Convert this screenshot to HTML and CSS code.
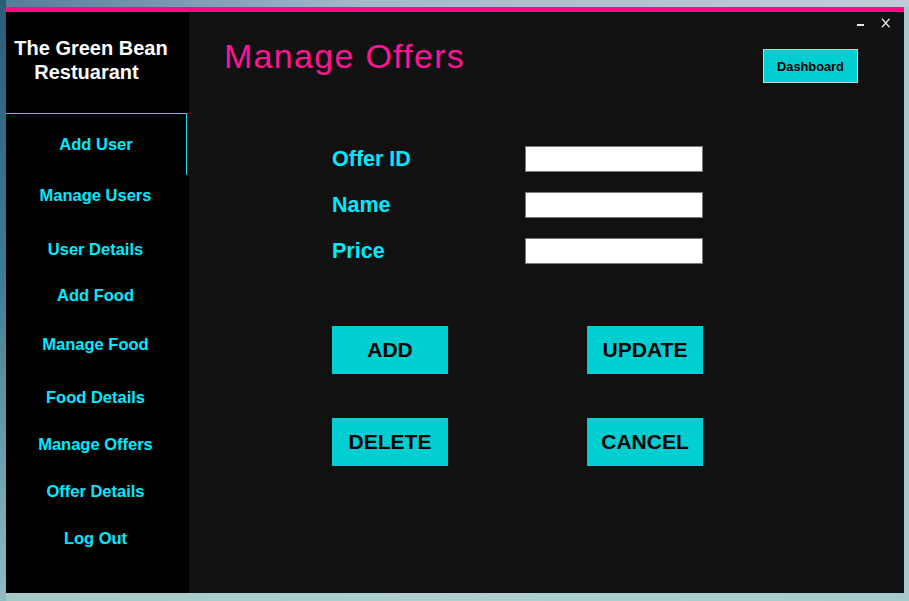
FILE: index.html
```html
<!DOCTYPE html>
<html lang="en">
<head>
<meta charset="utf-8">
<title>Manage Offers</title>
<link rel="stylesheet" href="styles.css">
</head>
<body>
<div class="window">
  <div class="accent"></div>
  <div class="frame">
    <aside class="sidebar">
      <div class="brand">
        <span class="brand-line">The Green Bean</span>
        <span class="brand-line brand-line-2">Restuarant</span>
      </div>
      <nav class="nav">
        <a class="nav-item active">Add User</a>
        <a class="nav-item">Manage Users</a>
        <a class="nav-item">User Details</a>
        <a class="nav-item">Add Food</a>
        <a class="nav-item">Manage Food</a>
        <a class="nav-item">Food Details</a>
        <a class="nav-item">Manage Offers</a>
        <a class="nav-item">Offer Details</a>
        <a class="nav-item">Log Out</a>
      </nav>
    </aside>
    <main class="main">
      <div class="chrome">
        <svg class="chrome-icons" width="33" height="10" viewBox="0 0 33 10">
          <rect x="0" y="6" width="7" height="2" fill="#e4e8ea"/>
          <path d="M25 0.8 L32.5 9.2 M32.5 0.8 L25 9.2" stroke="#dfe7ee" stroke-width="1.3" fill="none"/>
        </svg>
      </div>
      <header class="head">
        <h1 class="title">Manage Offers</h1>
        <button class="dash" type="button">Dashboard</button>
      </header>
      <form class="form">
        <div class="fields">
          <label class="field-label">Offer ID</label>
          <input class="field-input" type="text">
          <label class="field-label">Name</label>
          <input class="field-input" type="text">
          <label class="field-label">Price</label>
          <input class="field-input" type="text">
        </div>
        <div class="actions">
          <button class="btn" type="button">ADD</button>
          <button class="btn" type="button">UPDATE</button>
          <button class="btn" type="button">DELETE</button>
          <button class="btn" type="button">CANCEL</button>
        </div>
      </form>
    </main>
  </div>
</div>
</body>
</html>
```
FILE: styles.css
```css
html, body {
  margin: 0;
  width: 909px;
  height: 601px;
  overflow: hidden;
}

body {
  box-sizing: border-box;
  padding: 7px 5px 8px 6px;
  background:
    linear-gradient(180deg, #2c5d78 0%, #3f7a93 45%, #8fbcc0 100%) left top / 6px 100% no-repeat,
    linear-gradient(90deg, #4e7f99 0%, #9fbccb 40%, #bccfd9 100%) left top / 100% 7px no-repeat,
    linear-gradient(90deg, #a4c8c8 0%, #b0d0d0 50%, #a6cacb 100%);
  font-family: "Liberation Sans", Arial, sans-serif;
}

.window {
  width: 898px;
  height: 586px;
  display: flex;
  flex-direction: column;
}

.accent {
  height: 5px;
  background: #ff0a84;
  flex: none;
}

.frame {
  flex: 1;
  display: flex;
  min-height: 0;
}

/* Sidebar */
.sidebar {
  width: 183px;
  flex: none;
  background: #000;
  display: flex;
  flex-direction: column;
}

.brand {
  box-sizing: border-box;
  height: 101px;
  width: 163px;
  padding: 24px 0 0 7px;
  text-align: center;
  color: #fff;
}

.brand-line {
  display: block;
  font-weight: bold;
  font-size: 20px;
  line-height: 24px;
}

.brand-line-2 {
  padding-right: 9px;
}

.nav {
  display: flex;
  flex-direction: column;
}

.nav-item {
  display: block;
  margin-right: 2px;
  padding-right: 2px;
  color: #00eaff;
  font-weight: bold;
  font-size: 16.5px;
  line-height: 30px;
  text-align: center;
  text-decoration: none;
}

.nav-item.active {
  line-height: 61px;
  padding-right: 0;
  border-top: 1px solid #19e3f0;
  border-right: 1px solid #19e3f0;
}

.nav-item:nth-child(2) { margin-top: 5px; }
.nav-item:nth-child(3) { margin-top: 24px; }
.nav-item:nth-child(4) { margin-top: 16px; }
.nav-item:nth-child(5) { margin-top: 18.5px; }
.nav-item:nth-child(6) { margin-top: 23.5px; }
.nav-item:nth-child(7) { margin-top: 16.5px; }
.nav-item:nth-child(8) { margin-top: 17.5px; }
.nav-item:nth-child(9) { margin-top: 16.5px; }

/* Main */
.main {
  flex: 1;
  background: #111111;
  display: flex;
  flex-direction: column;
}

.chrome {
  box-sizing: border-box;
  height: 26px;
  display: flex;
  justify-content: flex-end;
  align-items: flex-start;
  padding-right: 14px;
}

.chrome-icons {
  display: block;
  margin-top: 6px;
}

.head {
  display: flex;
  justify-content: space-between;
  align-items: flex-start;
  padding: 0 46px 0 35px;
}

.title {
  margin: 0;
  font-weight: normal;
  font-size: 34px;
  letter-spacing: 1.3px;
  line-height: 37px;
  color: #ff1493;
}

.dash {
  margin-top: 11px;
  width: 95px;
  height: 34px;
  padding: 0;
  border: 1px solid #d0d0d0;
  background: #00ced1;
  color: #000;
  font-family: "Liberation Sans", sans-serif;
  font-weight: bold;
  font-size: 12.8px;
}

.form {
  margin: 63px 0 0 0;
  padding-left: 143px;
}

.fields {
  display: grid;
  grid-template-columns: 193px 178px;
  row-gap: 20px;
  align-items: center;
}

.field-label {
  color: #00eaff;
  font-weight: bold;
  font-size: 21.5px;
}

.field-input {
  box-sizing: border-box;
  height: 26px;
  width: 178px;
  margin: 0;
  padding: 0 3px;
  border: 1px solid #7a7a7a;
  background: #fff;
}

.actions {
  margin-top: 62px;
  display: grid;
  grid-template-columns: 116px 116px;
  column-gap: 139px;
  row-gap: 44px;
}

.btn {
  height: 48px;
  padding: 0;
  border: none;
  background: #00ced1;
  color: #000;
  font-family: "Liberation Sans", sans-serif;
  font-weight: bold;
  font-size: 21px;
}
```
